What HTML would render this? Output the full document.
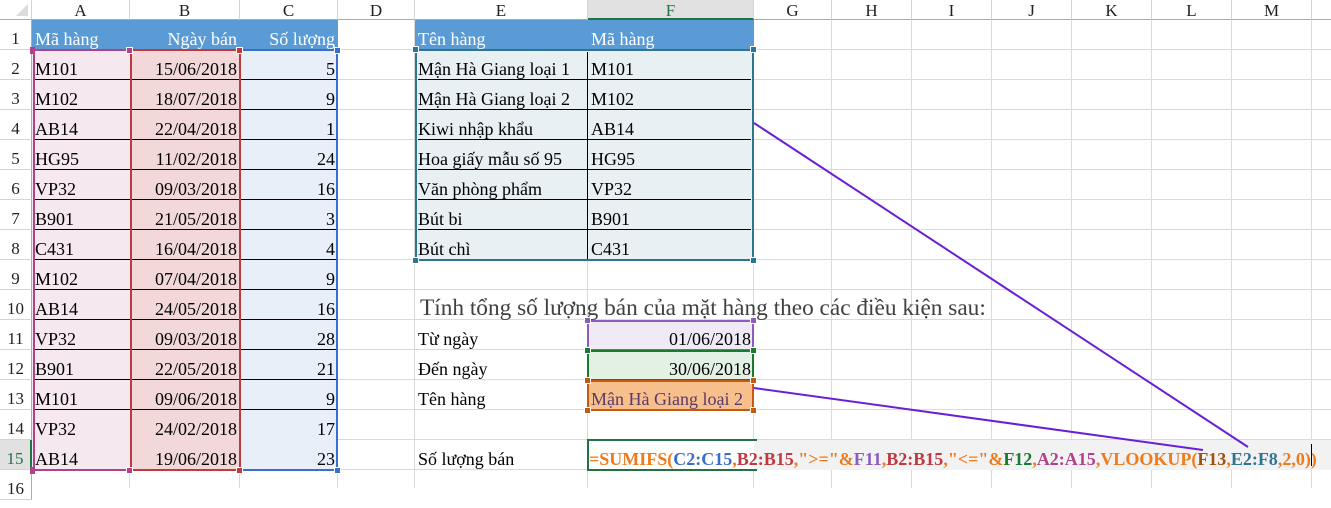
<!DOCTYPE html>
<html><head><meta charset="utf-8"><style>
*{margin:0;padding:0;box-sizing:border-box}
body{width:1331px;height:488px;overflow:hidden;position:relative;background:#fff;font-family:"Liberation Serif",serif;font-size:18px;color:#000}
.a{position:absolute}
.ch{position:absolute;top:0;height:20px;line-height:22px;text-align:center;font-size:17px;color:#222;border-right:1px solid #d4d4d4;border-bottom:1px solid #ababab;background:#fff}
.rh{position:absolute;left:0;width:32px;height:30px;line-height:38px;text-align:center;font-size:17px;color:#222;border-bottom:1px solid #d4d4d4;border-right:1px solid #ababab}
.c{position:absolute;height:30px;line-height:38px;padding:0 3px;white-space:nowrap;overflow:visible}
.r{text-align:right}
.sq{position:absolute;width:7px;height:7px}
</style></head><body>
<div class="a" style="left:32px;top:20px;width:1299px;height:468px;background-image:repeating-linear-gradient(to bottom,transparent 0 29px,#dadada 29px 30px)"></div>
<div class="a" style="left:129px;top:20px;width:1px;height:468px;background:#dadada"></div>
<div class="a" style="left:239px;top:20px;width:1px;height:468px;background:#dadada"></div>
<div class="a" style="left:337px;top:20px;width:1px;height:468px;background:#dadada"></div>
<div class="a" style="left:414px;top:20px;width:1px;height:468px;background:#dadada"></div>
<div class="a" style="left:587px;top:20px;width:1px;height:468px;background:#dadada"></div>
<div class="a" style="left:753px;top:20px;width:1px;height:468px;background:#dadada"></div>
<div class="a" style="left:831px;top:20px;width:1px;height:468px;background:#dadada"></div>
<div class="a" style="left:911px;top:20px;width:1px;height:468px;background:#dadada"></div>
<div class="a" style="left:991px;top:20px;width:1px;height:468px;background:#dadada"></div>
<div class="a" style="left:1071px;top:20px;width:1px;height:468px;background:#dadada"></div>
<div class="a" style="left:1151px;top:20px;width:1px;height:468px;background:#dadada"></div>
<div class="a" style="left:1231px;top:20px;width:1px;height:468px;background:#dadada"></div>
<div class="a" style="left:1311px;top:20px;width:1px;height:468px;background:#dadada"></div>

<div class="ch" style="left:0;width:32px;background:#fff"><div style="position:absolute;right:3px;bottom:3px;width:0;height:0;border-left:12px solid transparent;border-bottom:12px solid #dcdcdc"></div></div>
<div class="ch" style="left:32px;width:98px">A</div>
<div class="ch" style="left:130px;width:110px">B</div>
<div class="ch" style="left:240px;width:98px">C</div>
<div class="ch" style="left:338px;width:77px">D</div>
<div class="ch" style="left:415px;width:173px">E</div>
<div class="ch" style="left:588px;width:166px;background:#e1e1e1;color:#217346;border-bottom:2px solid #217346">F</div>
<div class="ch" style="left:754px;width:78px">G</div>
<div class="ch" style="left:832px;width:80px">H</div>
<div class="ch" style="left:912px;width:80px">I</div>
<div class="ch" style="left:992px;width:80px">J</div>
<div class="ch" style="left:1072px;width:80px">K</div>
<div class="ch" style="left:1152px;width:80px">L</div>
<div class="ch" style="left:1232px;width:80px">M</div>
<div class="ch" style="left:1312px;width:19px;border-right:none"></div>

<div class="rh" style="top:20px">1</div><div class="rh" style="top:50px">2</div><div class="rh" style="top:80px">3</div><div class="rh" style="top:110px">4</div><div class="rh" style="top:140px">5</div><div class="rh" style="top:170px">6</div><div class="rh" style="top:200px">7</div><div class="rh" style="top:230px">8</div><div class="rh" style="top:260px">9</div><div class="rh" style="top:290px">10</div><div class="rh" style="top:320px">11</div><div class="rh" style="top:350px">12</div><div class="rh" style="top:380px">13</div><div class="rh" style="top:410px">14</div>
<div class="rh" style="top:440px;background:#e1e1e1;color:#217346;border-right:2px solid #217346">15</div>
<div class="rh" style="top:470px">16</div>

<div class="a" style="left:32px;top:20px;width:306px;height:30px;background:#5b9bd5"></div>
<div class="a" style="left:32px;top:50px;width:98px;height:420px;background:#f5e8ee"></div>
<div class="a" style="left:130px;top:50px;width:110px;height:420px;background:#f2d8d8"></div>
<div class="a" style="left:240px;top:50px;width:98px;height:420px;background:#e9eff8"></div>
<div class="a" style="left:34px;top:79px;width:302px;height:360px;background-image:repeating-linear-gradient(to bottom,#000 0 1px,transparent 1px 30px)"></div>
<div class="c" style="left:32px;top:20px;width:98px;color:#fff">Mã hàng</div>
<div class="c r" style="left:130px;top:20px;width:110px;color:#fff">Ngày bán</div>
<div class="c r" style="left:240px;top:20px;width:98px;color:#fff">Số lượng</div>

<div class="c" style="left:32px;top:50px">M101</div><div class="c r" style="left:130px;top:50px;width:110px">15/06/2018</div><div class="c r" style="left:240px;top:50px;width:98px">5</div>
<div class="c" style="left:32px;top:80px">M102</div><div class="c r" style="left:130px;top:80px;width:110px">18/07/2018</div><div class="c r" style="left:240px;top:80px;width:98px">9</div>
<div class="c" style="left:32px;top:110px">AB14</div><div class="c r" style="left:130px;top:110px;width:110px">22/04/2018</div><div class="c r" style="left:240px;top:110px;width:98px">1</div>
<div class="c" style="left:32px;top:140px">HG95</div><div class="c r" style="left:130px;top:140px;width:110px">11/02/2018</div><div class="c r" style="left:240px;top:140px;width:98px">24</div>
<div class="c" style="left:32px;top:170px">VP32</div><div class="c r" style="left:130px;top:170px;width:110px">09/03/2018</div><div class="c r" style="left:240px;top:170px;width:98px">16</div>
<div class="c" style="left:32px;top:200px">B901</div><div class="c r" style="left:130px;top:200px;width:110px">21/05/2018</div><div class="c r" style="left:240px;top:200px;width:98px">3</div>
<div class="c" style="left:32px;top:230px">C431</div><div class="c r" style="left:130px;top:230px;width:110px">16/04/2018</div><div class="c r" style="left:240px;top:230px;width:98px">4</div>
<div class="c" style="left:32px;top:260px">M102</div><div class="c r" style="left:130px;top:260px;width:110px">07/04/2018</div><div class="c r" style="left:240px;top:260px;width:98px">9</div>
<div class="c" style="left:32px;top:290px">AB14</div><div class="c r" style="left:130px;top:290px;width:110px">24/05/2018</div><div class="c r" style="left:240px;top:290px;width:98px">16</div>
<div class="c" style="left:32px;top:320px">VP32</div><div class="c r" style="left:130px;top:320px;width:110px">09/03/2018</div><div class="c r" style="left:240px;top:320px;width:98px">28</div>
<div class="c" style="left:32px;top:350px">B901</div><div class="c r" style="left:130px;top:350px;width:110px">22/05/2018</div><div class="c r" style="left:240px;top:350px;width:98px">21</div>
<div class="c" style="left:32px;top:380px">M101</div><div class="c r" style="left:130px;top:380px;width:110px">09/06/2018</div><div class="c r" style="left:240px;top:380px;width:98px">9</div>
<div class="c" style="left:32px;top:410px">VP32</div><div class="c r" style="left:130px;top:410px;width:110px">24/02/2018</div><div class="c r" style="left:240px;top:410px;width:98px">17</div>
<div class="c" style="left:32px;top:440px">AB14</div><div class="c r" style="left:130px;top:440px;width:110px">19/06/2018</div><div class="c r" style="left:240px;top:440px;width:98px">23</div>

<div class="a" style="left:33px;top:49px;width:97px;height:422px;border:2px solid #b0428a;border-right:none"></div>
<div class="a" style="left:130px;top:49px;width:111px;height:422px;border:2px solid #c0393f"></div>
<div class="a" style="left:241px;top:49px;width:97px;height:422px;border:2px solid #3a6fc9;border-left:none"></div>
<div class="sq" style="left:30px;top:47px;background:#b0428a;width:5px"></div>
<div class="sq" style="left:126px;top:47px;background:#b0428a;border:1px solid #fff"></div>
<div class="sq" style="left:236px;top:47px;background:#c0393f;border:1px solid #fff"></div>
<div class="sq" style="left:334px;top:47px;background:#3a6fc9;border:1px solid #fff"></div>
<div class="sq" style="left:30px;top:467px;background:#b0428a;width:5px"></div>
<div class="sq" style="left:126px;top:467px;background:#b0428a;border:1px solid #fff"></div>
<div class="sq" style="left:236px;top:467px;background:#c0393f;border:1px solid #fff"></div>
<div class="sq" style="left:334px;top:467px;background:#3a6fc9;border:1px solid #fff"></div>

<div class="a" style="left:415px;top:20px;width:339px;height:30px;background:#5b9bd5"></div>
<div class="a" style="left:415px;top:50px;width:339px;height:210px;background:#e8f0f3"></div>
<div class="a" style="left:418px;top:79px;width:333px;height:180px;background-image:repeating-linear-gradient(to bottom,#000 0 1px,transparent 1px 30px)"></div>
<div class="a" style="left:587px;top:52px;width:1px;height:207px;background:#000"></div>
<div class="a" style="left:415px;top:49px;width:339px;height:212px;border:2px solid #2f7592"></div>
<div class="sq" style="left:412px;top:46px;background:#2f7592;border:1px solid #fff"></div>
<div class="sq" style="left:750px;top:46px;background:#2f7592;border:1px solid #fff"></div>
<div class="sq" style="left:412px;top:257px;background:#2f7592;border:1px solid #fff"></div>
<div class="sq" style="left:750px;top:257px;background:#2f7592;border:1px solid #fff"></div>
<div class="c" style="left:415px;top:20px;color:#fff">Tên hàng</div><div class="c" style="left:588px;top:20px;color:#fff">Mã hàng</div>
<div class="c" style="left:415px;top:50px">Mận Hà Giang loại 1</div><div class="c" style="left:588px;top:50px">M101</div>
<div class="c" style="left:415px;top:80px">Mận Hà Giang loại 2</div><div class="c" style="left:588px;top:80px">M102</div>
<div class="c" style="left:415px;top:110px">Kiwi nhập khẩu</div><div class="c" style="left:588px;top:110px">AB14</div>
<div class="c" style="left:415px;top:140px">Hoa giấy mẫu số 95</div><div class="c" style="left:588px;top:140px">HG95</div>
<div class="c" style="left:415px;top:170px">Văn phòng phẩm</div><div class="c" style="left:588px;top:170px">VP32</div>
<div class="c" style="left:415px;top:200px">Bút bi</div><div class="c" style="left:588px;top:200px">B901</div>
<div class="c" style="left:415px;top:230px">Bút chì</div><div class="c" style="left:588px;top:230px">C431</div>

<div class="a" style="left:420px;top:292px;font-size:23.3px;color:#404040;white-space:nowrap;line-height:32px">Tính tổng số lượng bán của mặt hàng theo các điều kiện sau:</div>
<div class="c" style="left:415px;top:320px">Từ ngày</div>
<div class="c" style="left:415px;top:350px">Đến ngày</div>
<div class="c" style="left:415px;top:380px">Tên hàng</div>
<div class="c" style="left:415px;top:440px">Số lượng bán</div>
<div class="a" style="left:587px;top:320px;width:167px;height:31px;background:#efeaf5;border:2px solid #8a5dbf"></div>
<div class="a" style="left:587px;top:350px;width:167px;height:31px;background:#e3f1e5;border:2px solid #1a7a2e"></div>
<div class="a" style="left:587px;top:380px;width:167px;height:31px;background:#f7bf8b;border:2px solid #c55a11"></div>
<div class="sq" style="left:584px;top:317px;background:#8a5dbf;border:1px solid #fff"></div><div class="sq" style="left:750px;top:317px;background:#8a5dbf;border:1px solid #fff"></div>
<div class="sq" style="left:584px;top:347px;background:#1a7a2e;border:1px solid #fff"></div><div class="sq" style="left:750px;top:347px;background:#1a7a2e;border:1px solid #fff"></div>
<div class="sq" style="left:584px;top:377px;background:#c55a11;border:1px solid #fff"></div><div class="sq" style="left:750px;top:377px;background:#c55a11;border:1px solid #fff"></div>
<div class="sq" style="left:584px;top:407px;background:#c55a11;border:1px solid #fff"></div><div class="sq" style="left:750px;top:407px;background:#c55a11;border:1px solid #fff"></div>
<div class="c r" style="left:588px;top:320px;width:166px">01/06/2018</div>
<div class="c r" style="left:588px;top:350px;width:166px">30/06/2018</div>
<div class="c" style="left:588px;top:380px;color:#5a3a6a">Mận Hà Giang loại 2</div>

<div class="a" style="left:754px;top:440px;width:577px;height:30px;background:#f2f2f2"></div>
<div class="a" style="left:587px;top:439px;width:167px;height:32px;border:2px solid #217346;border-right:none;background:#fff"></div>
<div class="a" style="left:754px;top:439px;width:3px;height:2px;background:#217346"></div>
<div class="a" style="left:754px;top:469px;width:3px;height:2px;background:#217346"></div>
<div class="c" style="left:586px;top:440px;font-weight:bold;font-size:18px;color:#f07a1a">=SUMIFS(<span style="color:#3a6fc9">C2:C15</span>,<span style="color:#c0393f">B2:B15</span>,"&gt;="&amp;<span style="color:#8a5dbf">F11</span>,<span style="color:#c0393f">B2:B15</span>,"&lt;="&amp;<span style="color:#1a7a2e">F12</span>,<span style="color:#b0428a">A2:A15</span>,VLOOKUP(<span style="color:#a0520f">F13</span>,<span style="color:#2f7592">E2:F8</span>,2,0))</div>
<div class="a" style="left:1311px;top:444px;width:1px;height:22px;background:#000"></div>

<svg class="a" style="left:0;top:0" width="1331" height="488">
<line x1="754" y1="123" x2="1248" y2="447" stroke="#6a1fd6" stroke-width="2"/>
<line x1="754" y1="388" x2="1203" y2="450" stroke="#6a1fd6" stroke-width="2"/>
</svg>
</body></html>
